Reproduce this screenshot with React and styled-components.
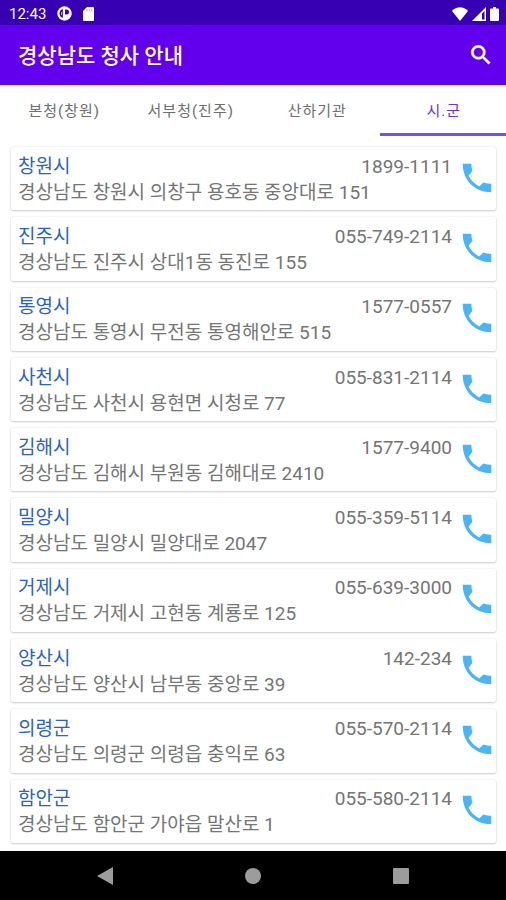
import React, { useState } from "react";
import styled, { createGlobalStyle } from "styled-components";

const GlobalStyle = createGlobalStyle`
  * { box-sizing: border-box; }
  body {
    margin: 0;
    background: #fff;
    font-family: Roboto, "Noto Sans CJK KR", sans-serif;
  }
  button {
    border: 0;
    padding: 0;
    background: none;
    font: inherit;
    cursor: pointer;
  }
  svg { display: block; }
`;

const Page = styled.div`
  display: flex;
  flex-direction: column;
  min-height: 100vh;
`;

const StatusBar = styled.div`
  display: flex;
  align-items: center;
  justify-content: space-between;
  height: 25px;
  padding: 2px 7px 0 9px;
  background: #3700b3;
  color: #fff;
`;

const StatusGroup = styled.div`
  display: flex;
  align-items: center;
  gap: ${(p) => p.$gap}px;
`;

const Clock = styled.time`
  font-size: 15px;
  line-height: 20px;
`;

const AppBar = styled.header`
  display: flex;
  align-items: center;
  justify-content: space-between;
  height: 60px;
  padding: 0 12px 0 18px;
  background: #6200ee;
  color: #fff;
`;

const Title = styled.h1`
  margin: 0;
  padding-top: 2px;
  font-size: 21px;
  line-height: 30px;
  font-weight: 500;
`;

const Tabs = styled.div`
  display: grid;
  grid-template-columns: repeat(4, 1fr);
  height: 51px;
`;

const Tab = styled.button`
  && {
    padding-left: 2px;
    border-top: 3px solid transparent;
    border-bottom: 3px solid ${(p) => (p.$active ? "#7d4fe0" : "transparent")};
    color: ${(p) => (p.$active ? "#6a35e0" : "#6e6e6e")};
    font-size: 15px;
    line-height: 22px;
    letter-spacing: 1px;
  }
`;

const List = styled.ul`
  display: flex;
  flex: 1;
  flex-direction: column;
  gap: 7px;
  margin: 0;
  padding: 11px 10px 8px 11px;
  list-style: none;
`;

const Card = styled.li`
  display: flex;
  flex: 1;
  align-items: center;
  padding-left: 7px;
  border-radius: 2px;
  background: #fff;
  box-shadow: 0 1px 2px rgba(0, 0, 0, 0.18), 0 0 2px rgba(0, 0, 0, 0.12);
`;

const Details = styled.div`
  flex: 1;
  min-width: 0;
  padding-top: 2px;
  font-size: 19px;
  line-height: 26px;
  color: #757575;
`;

const Heading = styled.div`
  display: flex;
  justify-content: space-between;
  padding-right: 6px;
`;

const Name = styled.span`
  color: #2a64c0;
`;

const Address = styled.div`
  white-space: nowrap;
`;

const CallButton = styled.button`
  flex: none;
  && {
    padding-bottom: 2px;
    color: #4ab4f8;
  }
`;

const NavBar = styled.nav`
  display: grid;
  grid-template-columns: repeat(3, 1fr);
  height: 49px;
  padding: 0 31px;
  background: #000;
`;

const NavButton = styled.button`
  && {
    display: flex;
    align-items: center;
    justify-content: center;
    color: #9c9c9c;
  }
`;

const tabs = ["본청(창원)", "서부청(진주)", "산하기관", "시.군"];

const offices = [
  ["창원시", "1899-1111", "경상남도 창원시 의창구 용호동 중앙대로 151"],
  ["진주시", "055-749-2114", "경상남도 진주시 상대1동 동진로 155"],
  ["통영시", "1577-0557", "경상남도 통영시 무전동 통영해안로 515"],
  ["사천시", "055-831-2114", "경상남도 사천시 용현면 시청로 77"],
  ["김해시", "1577-9400", "경상남도 김해시 부원동 김해대로 2410"],
  ["밀양시", "055-359-5114", "경상남도 밀양시 밀양대로 2047"],
  ["거제시", "055-639-3000", "경상남도 거제시 고현동 계룡로 125"],
  ["양산시", "142-234", "경상남도 양산시 남부동 중앙로 39"],
  ["의령군", "055-570-2114", "경상남도 의령군 의령읍 충익로 63"],
  ["함안군", "055-580-2114", "경상남도 함안군 가야읍 말산로 1"],
];

const AppIcon = () => (
  <svg width="15" height="15" viewBox="0 0 15 15" aria-hidden="true">
    <circle cx="7.5" cy="7.5" r="7.2" fill="#fff" />
    <path d="M5.8 3C3.600 3.800 2.500 5.500 2.500 7.500s1.100 3.700 3.300 4.500z" fill="#3700b3" />
    <path d="M8 3.500h1.500a2.500 2.500 0 0 1 0 5H8z" fill="#3700b3" />
    <path d="M4.500 6v3" stroke="#fff" strokeOpacity=".6" />
  </svg>
);

const SdCardIcon = () => (
  <svg width="11" height="14" viewBox="0 0 11 14" aria-hidden="true">
    <path d="M4 0h6a1 1 0 0 1 1 1v12a1 1 0 0 1-1 1H1a1 1 0 0 1-1-1V4z" fill="#fff" />
    <path d="M4 2v2.500M6.300 2v2.500M8.600 2v2.500" stroke="#3700b3" strokeOpacity=".35" />
  </svg>
);

const WifiIcon = () => (
  <svg width="16" height="14" viewBox="0 0 16 14" aria-hidden="true">
    <path d="M0 4C4.500-.9 11.500-.9 16 4L8 14z" fill="#fff" />
  </svg>
);

const SignalIcon = () => (
  <svg width="14" height="14" viewBox="0 0 14 14" aria-hidden="true">
    <path d="M0 14 14 0v14z" fill="#fff" />
    <path d="M10 6.500 12.500 4v8.500H10z" fill="#3700b3" />
  </svg>
);

const BatteryIcon = () => (
  <svg width="9" height="14" viewBox="0 0 9 14" aria-hidden="true">
    <path d="M3 0h3v1.500h2a1 1 0 0 1 1 1V13a1 1 0 0 1-1 1H1a1 1 0 0 1-1-1V2.500a1 1 0 0 1 1-1h2z" fill="#fff" />
  </svg>
);

const SearchIcon = () => (
  <svg width="26" height="26" viewBox="0 0 24 24" fill="#fff" stroke="#fff" strokeWidth=".5" aria-hidden="true">
    <path d="M15.500 14h-.79l-.28-.27A6.471 6.471 0 0 0 16 9.500 6.500 6.500 0 1 0 9.500 16c1.610 0 3.090-.59 4.230-1.570l.27.28v.79l5 4.990L20.490 19l-4.990-5zm-6 0C7.010 14 5 11.990 5 9.500S7.010 5 9.500 5 14 7.010 14 9.500 11.990 14 9.500 14z" />
  </svg>
);

const PhoneIcon = () => (
  <svg width="38" height="38" viewBox="0 0 24 24" fill="currentColor" aria-hidden="true">
    <path d="M3 3h5.400c.05 1.500.25 3 .7 4.400L6.700 10.600c1.500 3 3.700 5.200 6.700 6.700l2.600-2.400c1.600.5 3.300.75 5 .8V21C10.500 21 3 13.500 3 3z" />
  </svg>
);

export default function App() {
  const [active, setActive] = useState(3);
  return (
    <>
      <GlobalStyle />
      <Page>
        <StatusBar>
          <StatusGroup $gap={11}>
            <Clock>12:43</Clock>
            <AppIcon />
            <SdCardIcon />
          </StatusGroup>
          <StatusGroup $gap={4}>
            <WifiIcon />
            <SignalIcon />
            <BatteryIcon />
          </StatusGroup>
        </StatusBar>
        <AppBar>
          <Title>경상남도 청사 안내</Title>
          <button type="button" aria-label="검색">
            <SearchIcon />
          </button>
        </AppBar>
        <Tabs role="tablist">
          {tabs.map((label, i) => (
            <Tab
              key={label}
              type="button"
              role="tab"
              aria-selected={i === active}
              $active={i === active}
              onClick={() => setActive(i)}
            >
              {label}
            </Tab>
          ))}
        </Tabs>
        <List>
          {offices.map(([name, phone, address]) => (
            <Card key={name}>
              <Details>
                <Heading>
                  <Name>{name}</Name>
                  <span>{phone}</span>
                </Heading>
                <Address>{address}</Address>
              </Details>
              <CallButton type="button" aria-label={`${name} 전화`}>
                <PhoneIcon />
              </CallButton>
            </Card>
          ))}
        </List>
        <NavBar>
          <NavButton type="button" aria-label="뒤로">
            <svg width="16" height="18" viewBox="0 0 16 18" fill="currentColor" aria-hidden="true">
              <path d="M0 9 16 0v18z" />
            </svg>
          </NavButton>
          <NavButton type="button" aria-label="홈">
            <svg width="16" height="16" viewBox="0 0 16 16" fill="currentColor" aria-hidden="true">
              <circle cx="8" cy="8" r="8" />
            </svg>
          </NavButton>
          <NavButton type="button" aria-label="최근 앱">
            <svg width="16" height="16" viewBox="0 0 16 16" fill="currentColor" aria-hidden="true">
              <rect width="16" height="16" rx="1" />
            </svg>
          </NavButton>
        </NavBar>
      </Page>
    </>
  );
}
